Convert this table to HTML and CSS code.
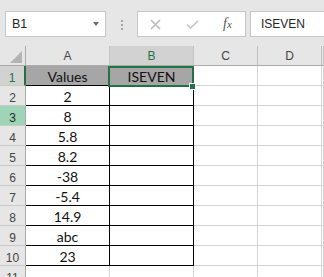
FILE: index.html
```html
<!DOCTYPE html>
<html lang="en">
<head>
    <meta charset="UTF-8">
    <title>ISEVEN</title>
    <link rel="stylesheet" href="styles.css">
</head>
<body>
    <div class="toolbar">
        <div class="namebox">B1<span class="caret"></span></div>
        <div class="dots"><i></i><i></i><i></i></div>
        <div class="fxbox">
            <svg class="cancel" width="11" height="11" viewBox="0 0 11 11"><path d="M1 1L10 10M10 1L1 10" stroke="#bcbcbc" stroke-width="1.6" fill="none"/></svg>
            <svg class="enter" width="13" height="9" viewBox="0 0 13 9"><path d="M1 4.5L4.5 8L12 1" stroke="#c4c4c4" stroke-width="1.6" fill="none"/></svg>
            <span class="fx"><i>f</i><span>x</span></span>
        </div>
        <div class="formula">ISEVEN</div>
    </div>

    <div class="sheet">
        <div class="hd corner"><svg width="26" height="19" viewBox="0 0 26 19"><path d="M22 5V17H10Z" fill="#b4b4b4"/></svg></div>
        <div class="hd">A</div>
        <div class="hd sel">B</div>
        <div class="hd">C</div>
        <div class="hd">D</div>
        <div class="hd"></div>

        <div class="rh sel">1</div>
        <div class="c bx title">Values</div>
        <div class="c bx title active">ISEVEN</div>
        <div class="c"></div><div class="c"></div><div class="c"></div>

        <div class="rh">2</div>
        <div class="c bx">2</div><div class="c bx"></div>
        <div class="c"></div><div class="c"></div><div class="c"></div>

        <div class="rh hover">3</div>
        <div class="c bx">8</div><div class="c bx"></div>
        <div class="c"></div><div class="c"></div><div class="c"></div>

        <div class="rh">4</div>
        <div class="c bx">5.8</div><div class="c bx"></div>
        <div class="c"></div><div class="c"></div><div class="c"></div>

        <div class="rh">5</div>
        <div class="c bx">8.2</div><div class="c bx"></div>
        <div class="c"></div><div class="c"></div><div class="c"></div>

        <div class="rh">6</div>
        <div class="c bx">-38</div><div class="c bx"></div>
        <div class="c"></div><div class="c"></div><div class="c"></div>

        <div class="rh">7</div>
        <div class="c bx">-5.4</div><div class="c bx"></div>
        <div class="c"></div><div class="c"></div><div class="c"></div>

        <div class="rh">8</div>
        <div class="c bx">14.9</div><div class="c bx"></div>
        <div class="c"></div><div class="c"></div><div class="c"></div>

        <div class="rh">9</div>
        <div class="c bx">abc</div><div class="c bx"></div>
        <div class="c"></div><div class="c"></div><div class="c"></div>

        <div class="rh">10</div>
        <div class="c bx">23</div><div class="c bx"></div>
        <div class="c"></div><div class="c"></div><div class="c"></div>

        <div class="rh">11</div>
        <div class="c"></div><div class="c"></div>
        <div class="c"></div><div class="c"></div><div class="c"></div>
    </div>
</body>
</html>
```

FILE: styles.css
```css
body {
    margin: 0;
    width: 324px;
    height: 277px;
    overflow: hidden;
    background: #fff;
    font-family: "Liberation Sans", Arial, sans-serif;
}
.toolbar {
    display: flex;
    align-items: flex-start;
    height: 46px;
    box-sizing: border-box;
    padding: 11px 0 0 5px;
    background: #e6e6e6;
}
.namebox {
    width: 101px;
    height: 26px;
    box-sizing: border-box;
    border: 1px solid #c6c6c6;
    background: #fff;
    display: flex;
    align-items: center;
    justify-content: space-between;
    padding: 0 6px;
    font-size: 12.5px;
    color: #262626;
}
.caret {
    border-left: 3px solid transparent;
    border-right: 3px solid transparent;
    border-top: 4px solid #6a6a6a;
}
.dots {
    width: 31px;
    display: flex;
    flex-direction: column;
    align-items: center;
    gap: 2px;
    padding-top: 9px;
}
.dots i {
    width: 2px;
    height: 2px;
    background: #a6a6a6;
}
.fxbox {
    width: 109px;
    height: 26px;
    box-sizing: border-box;
    border: 1px solid #c6c6c6;
    background: #fff;
    display: flex;
    align-items: center;
    padding-left: 12px;
}
.enter {
    margin-left: 25px;
}
.fx {
    margin-left: 24px;
    font-family: "Liberation Serif", "Times New Roman", serif;
    font-style: italic;
    color: #555;
    font-size: 14px;
}
.fx span {
    font-size: 11px;
}
.formula {
    flex: 1;
    margin-left: 4px;
    height: 26px;
    box-sizing: border-box;
    border: 1px solid #c6c6c6;
    border-right: none;
    background: #fff;
    padding-left: 10px;
    line-height: 24px;
    font-size: 12px;
    color: #262626;
}
.sheet {
    display: grid;
    grid-template-columns: 26px 84px 84px 64px 64px 1fr;
    grid-auto-rows: 20px;
}
.sheet > div {
    box-sizing: border-box;
    border-right: 1px solid #d4d4d4;
    border-bottom: 1px solid #d4d4d4;
    text-align: center;
    white-space: nowrap;
}
.sheet > .hd {
    background: #e6e6e6;
    border-right-color: #c2c2c2;
    border-bottom-color: #ababab;
    font-size: 12px;
    color: #444;
    line-height: 18px;
    padding-top: 1px;
}
.sheet > .corner {
    padding: 0;
    border-right-color: #ababab;
}
.corner svg {
    display: block;
}
.sheet > .hd.sel {
    background: #d2d2d2;
    color: #217346;
}
.sheet > .rh {
    background: #e6e6e6;
    border-right-color: #ababab;
    border-bottom-color: #c8c8c8;
    font-size: 12px;
    color: #444;
    line-height: 18px;
    padding-top: 3px;
}
.sheet > .rh.sel {
    background: #d2d2d2;
    color: #217346;
    border-right: 2px solid #217346;
}
.sheet > .rh.hover {
    background: #9fd5b7;
    color: #262626;
}
.sheet > .c {
    font-family: Lato, "Liberation Sans", sans-serif;
    font-size: 14px;
    line-height: 18px;
    padding-top: 2px;
    color: #111;
}
.sheet > .bx {
    border-right-color: #000;
    border-bottom-color: #000;
}
.sheet > .title {
    background: #a6a6a6;
}
.sheet > .active {
    position: relative;
}
.active::after {
    content: "";
    position: absolute;
    left: -2px;
    top: 0;
    width: 86px;
    height: 21px;
    box-sizing: border-box;
    border: 2px solid #217346;
}
.active::before {
    content: "";
    position: absolute;
    left: 79px;
    top: 17px;
    width: 7px;
    height: 7px;
    box-sizing: border-box;
    border: 1px solid #fff;
    background: #217346;
    z-index: 1;
}
```
